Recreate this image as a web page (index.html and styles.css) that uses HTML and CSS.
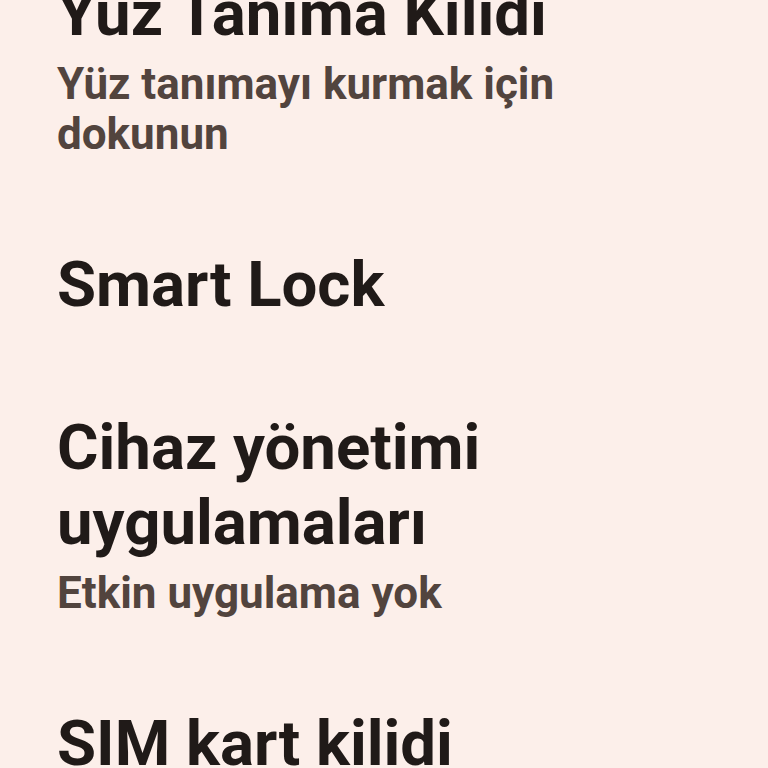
FILE: index.html
```html
<!DOCTYPE html>
<html lang="tr">
<head>
<meta charset="utf-8">
<link rel="stylesheet" href="styles.css">
</head>
<body>
<ul class="list">
  <li class="item">
    <div class="title">Yüz Tanıma Kilidi</div>
    <div class="summary">Yüz tanımayı kurmak için dokunun</div>
  </li>
  <li class="item">
    <div class="title">Smart Lock</div>
  </li>
  <li class="item">
    <div class="title">Cihaz yönetimi uygulamaları</div>
    <div class="summary">Etkin uygulama yok</div>
  </li>
  <li class="item">
    <div class="title">SIM kart kilidi</div>
  </li>
</ul>
</body>
</html>
```
FILE: styles.css
```css
html, body {
  margin: 0;
  padding: 0;
  background: #fcefea;
  overflow: hidden;
  height: 768px;
}
.list {
  list-style: none;
  margin: -68px 0 0 0;
  padding: 0;
  font-family: Roboto, "Noto Sans", sans-serif;
}
.item {
  padding: 44px 150px 44px 57px;
}
.title {
  font-size: 63.5px;
  line-height: 75px;
  font-weight: 700;
  color: #201a18;
}
.summary {
  margin-top: 8px;
  font-size: 44px;
  line-height: 50px;
  font-weight: 700;
  color: #52443e;
}
```
